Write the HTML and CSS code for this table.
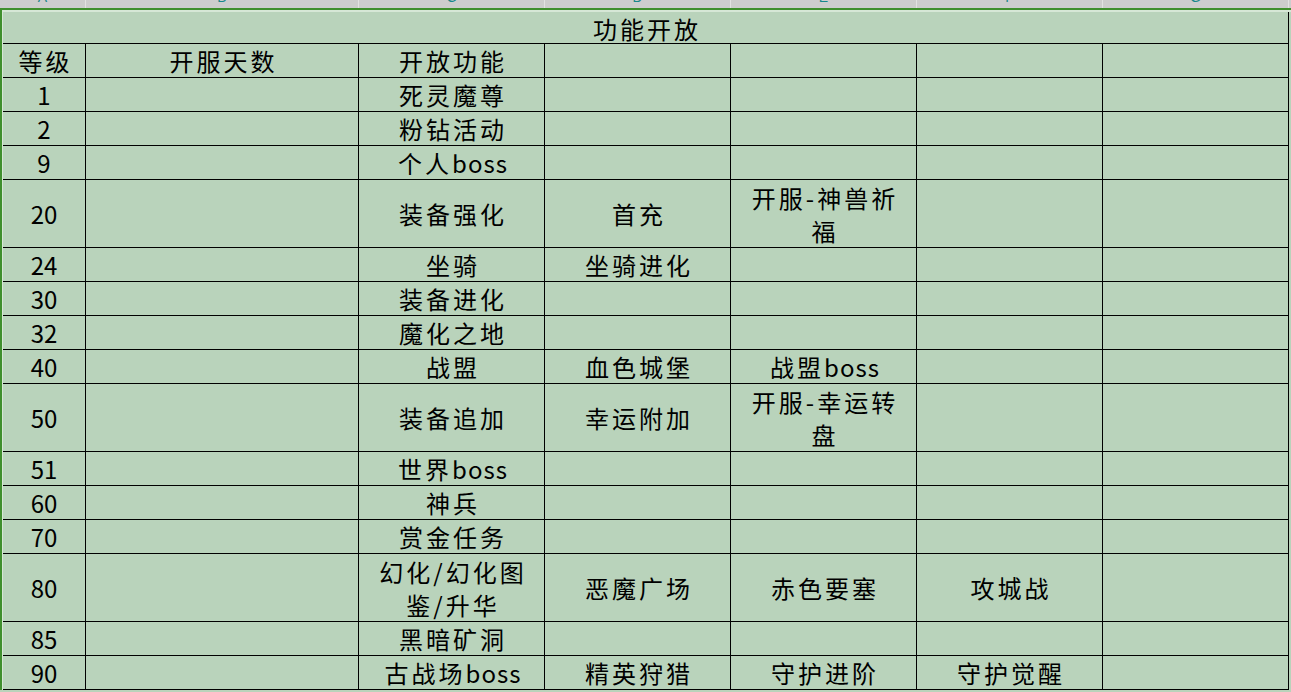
FILE: index.html
```html
<!DOCTYPE html>
<html lang="zh-CN">
<head>
<meta charset="utf-8">
<title>功能开放</title>
<link rel="stylesheet" href="styles.css">
</head>
<body>
<div class="colhdr">
  <div class="ch"><span>A</span></div>
  <div class="ch"><span>B</span></div>
  <div class="ch"><span>C</span></div>
  <div class="ch"><span>D</span></div>
  <div class="ch"><span>E</span></div>
  <div class="ch"><span>F</span></div>
  <div class="ch"><span>G</span></div>
  <div class="ch"></div>
</div>
<div class="sheet">
  <div class="inner">
    <div class="grid">
      <div class="c title">功能开放</div>

      <div class="c">等级</div><div class="c">开服天数</div><div class="c">开放功能</div><div class="c"></div><div class="c"></div><div class="c"></div><div class="c"></div>

      <div class="c n">1</div><div class="c"></div><div class="c">死灵魔尊</div><div class="c"></div><div class="c"></div><div class="c"></div><div class="c"></div>

      <div class="c n">2</div><div class="c"></div><div class="c">粉钻活动</div><div class="c"></div><div class="c"></div><div class="c"></div><div class="c"></div>

      <div class="c n">9</div><div class="c"></div><div class="c">个人<span class="lat">boss</span></div><div class="c"></div><div class="c"></div><div class="c"></div><div class="c"></div>

      <div class="c n">20</div><div class="c"></div><div class="c">装备强化</div><div class="c">首充</div><div class="c">开服-神兽祈<br>福</div><div class="c"></div><div class="c"></div>

      <div class="c n">24</div><div class="c"></div><div class="c">坐骑</div><div class="c">坐骑进化</div><div class="c"></div><div class="c"></div><div class="c"></div>

      <div class="c n">30</div><div class="c"></div><div class="c">装备进化</div><div class="c"></div><div class="c"></div><div class="c"></div><div class="c"></div>

      <div class="c n">32</div><div class="c"></div><div class="c">魔化之地</div><div class="c"></div><div class="c"></div><div class="c"></div><div class="c"></div>

      <div class="c n">40</div><div class="c"></div><div class="c">战盟</div><div class="c">血色城堡</div><div class="c">战盟<span class="lat">boss</span></div><div class="c"></div><div class="c"></div>

      <div class="c n">50</div><div class="c"></div><div class="c">装备追加</div><div class="c">幸运附加</div><div class="c">开服-幸运转<br>盘</div><div class="c"></div><div class="c"></div>

      <div class="c n">51</div><div class="c"></div><div class="c">世界<span class="lat">boss</span></div><div class="c"></div><div class="c"></div><div class="c"></div><div class="c"></div>

      <div class="c n">60</div><div class="c"></div><div class="c">神兵</div><div class="c"></div><div class="c"></div><div class="c"></div><div class="c"></div>

      <div class="c n">70</div><div class="c"></div><div class="c">赏金任务</div><div class="c"></div><div class="c"></div><div class="c"></div><div class="c"></div>

      <div class="c n">80</div><div class="c"></div><div class="c">幻化/幻化图<br>鉴/升华</div><div class="c">恶魔广场</div><div class="c">赤色要塞</div><div class="c">攻城战</div><div class="c"></div>

      <div class="c n">85</div><div class="c"></div><div class="c">黑暗矿洞</div><div class="c"></div><div class="c"></div><div class="c"></div><div class="c"></div>

      <div class="c n">90</div><div class="c"></div><div class="c">古战场<span class="lat">boss</span></div><div class="c">精英狩猎</div><div class="c">守护进阶</div><div class="c">守护觉醒</div><div class="c"></div>
    </div>
  </div>
</div>
</body>
</html>
```
FILE: styles.css
```css
html, body {
  margin: 0;
  padding: 0;
}
body {
  width: 1291px;
  height: 692px;
  overflow: hidden;
  background: #b9d3bb;
  font-family: "Noto Sans CJK SC", "Noto Sans", sans-serif;
  color: #000;
}
.colhdr {
  height: 8px;
  display: grid;
  grid-template-columns: 85px 272px 185px 185px 185px 185px 185px 1fr;
  column-gap: 1px;
  background: #e2e2e2;
  overflow: hidden;
}
.ch {
  background: #cdcdcd;
  display: flex;
  justify-content: center;
  align-items: flex-start;
  overflow: hidden;
}
.ch span {
  font-family: "Liberation Sans", Arial, sans-serif;
  font-size: 14px;
  line-height: 16px;
  color: #17888a;
  margin-top: -11px;
}
.sheet {
  border-top: 2px solid #3f8f2d;
  border-left: 2px solid #3f8f2d;
}
.inner {
  border-top: 2px solid #d6e7d6;
  border-left: 1px solid #d6e7d6;
}
.grid {
  width: 1285px;
  display: grid;
  grid-template-columns: 82px 272px 185px 185px 185px 185px 185px;
  grid-template-rows: 31px 33px 33px 33px 33px 67px 33px 33px 33px 33px 67px 33px 33px 33px 67px 33px 33px;
  gap: 1px;
  background: #000;
  border-right: 1px solid #000;
  border-bottom: 1px solid #000;
}
.c {
  background: #b9d3bb;
  display: flex;
  align-items: center;
  justify-content: center;
  text-align: center;
  font-size: 24px;
  line-height: 33px;
  letter-spacing: 3px;
  padding-left: 3px;
  white-space: nowrap;
}
.c.n {
  letter-spacing: 0;
  padding-left: 0;
}
.title {
  grid-column: 1 / -1;
  padding-top: 2px;
}
.lat {
  letter-spacing: 1px;
}
```
